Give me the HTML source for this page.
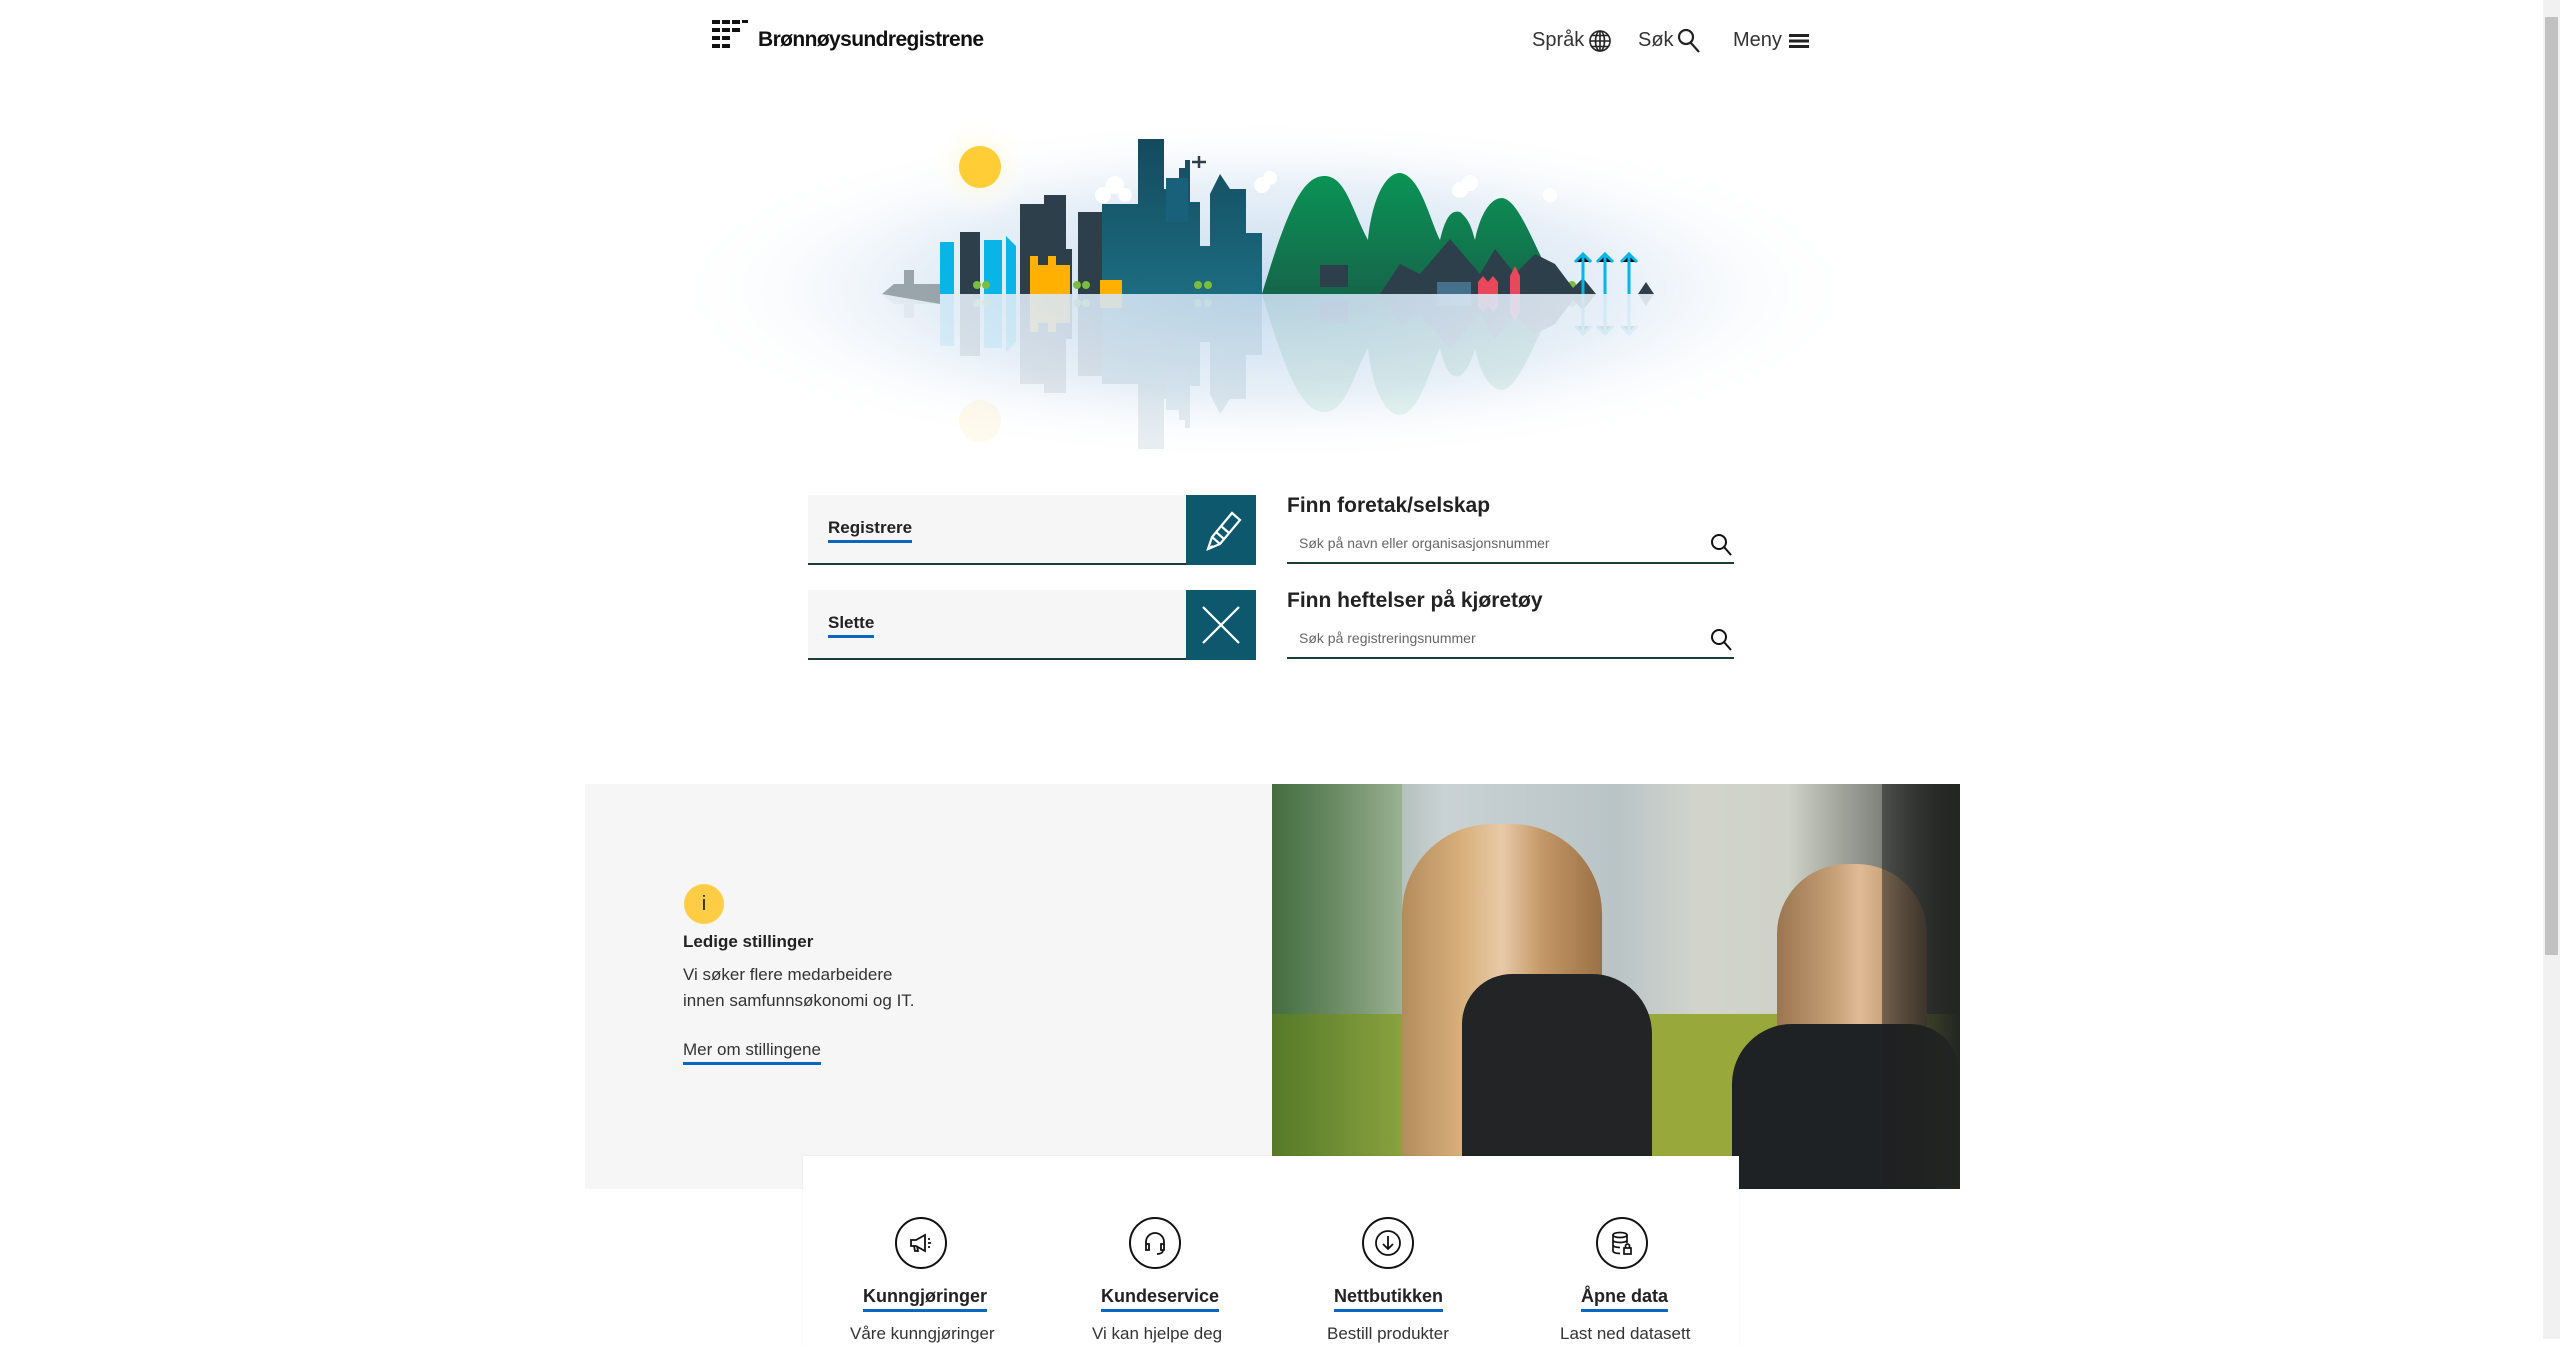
<!DOCTYPE html>
<html><head><meta charset="utf-8"><style>
*{margin:0;padding:0;box-sizing:border-box}
html,body{width:2560px;height:1339px;overflow:hidden;background:#fff;font-family:"Liberation Sans",sans-serif;color:#222}
.a{position:absolute}
.sb{left:2543px;top:0;width:17px;height:1339px;background:#f1f1f1}
.th{left:2545px;top:17px;width:13px;height:938px;background:#c1c1c1}
.nav{font-size:20px;color:#333;top:29px}
.card{background:#f6f6f6;border-bottom:2px solid #1a3c3c}
.sq{background:#0d586c}
.lk{font-weight:bold;font-size:17px;border-bottom:3px solid #0a66c2;padding-bottom:2px;color:#222}
.h{font-weight:bold;font-size:21px;color:#222}
.inp{border-bottom:2px solid #1a3c3c;font-size:14px;color:#666;padding-left:12px;padding-top:3px}
.ic{width:52px;height:52px;border:2px solid #111;border-radius:50%;display:flex;align-items:center;justify-content:center}
.tt{font-weight:bold;font-size:18px;border-bottom:3px solid #0a66c2;padding-bottom:2px}
</style></head><body>
<div class="a sb"></div><div class="a th"></div>
<svg class="a" style="left:712px;top:20px" width="36" height="30" viewBox="0 0 36 30">
<g fill="#111"><rect x="0" y="0" width="8" height="4"/><rect x="10" y="0" width="8" height="4"/><rect x="20" y="0" width="8" height="4"/><rect x="30" y="0" width="6" height="3"/>
<rect x="0" y="8" width="8" height="4"/><rect x="10" y="8" width="8" height="4"/><rect x="20" y="8" width="8" height="4"/>
<rect x="0" y="16" width="8" height="4"/><rect x="10" y="16" width="8" height="4"/>
<rect x="0" y="24" width="8" height="4"/><rect x="10" y="24" width="8" height="4"/></g></svg>
<div class="a" style="left:758px;top:28px;font-size:21px;font-weight:bold;color:#111;letter-spacing:-0.6px">Brønnøysundregistrene</div>
<div class="a nav" style="left:1532px">Språk</div>
<svg class="a" style="left:1588px;top:29px" width="24" height="24" viewBox="0 0 24 24" fill="none" stroke="#222" stroke-width="1.6"><circle cx="12" cy="12" r="10"/><ellipse cx="12" cy="12" rx="4.5" ry="10"/><path d="M2 12h20M4 6.5h16M4 17.5h16M12 2v20"/></svg>
<div class="a nav" style="left:1638px">Søk</div>
<svg class="a" style="left:1677px;top:28px" width="24" height="26" viewBox="0 0 24 26" fill="none" stroke="#222" stroke-width="2.2"><circle cx="9" cy="9" r="7"/><path d="M14 15l8 9"/></svg>
<div class="a nav" style="left:1733px">Meny</div>
<svg class="a" style="left:1789px;top:34px" width="20" height="14"><rect y="0" width="20" height="3" fill="#222"/><rect y="5.5" width="20" height="3" fill="#222"/><rect y="11" width="20" height="3" fill="#222"/></svg>

<svg class="a" style="left:0;top:0" width="2560" height="460" viewBox="0 0 2560 460">
<defs>
<radialGradient id="g" cx="0.5" cy="0.5" r="0.5"><stop offset="0" stop-color="#c6dcef"/><stop offset="0.6" stop-color="#e8f0f8"/><stop offset="1" stop-color="#fff" stop-opacity="0"/></radialGradient>
<radialGradient id="sg" cx="0.5" cy="0.5" r="0.5"><stop offset="0" stop-color="#fff4c8"/><stop offset="1" stop-color="#fff" stop-opacity="0"/></radialGradient>
<linearGradient id="mt" x1="0" y1="0" x2="0" y2="1"><stop offset="0" stop-color="#0a9455"/><stop offset="1" stop-color="#15664a"/></linearGradient>
<linearGradient id="bl" x1="0" y1="0" x2="0" y2="1"><stop offset="0" stop-color="#144a5e"/><stop offset="1" stop-color="#1c6c80"/></linearGradient>
<g id="city">
<path fill="#9aa5ab" d="M882 294l12-10h10v-14h10v14h26v20z"/>
<rect fill="#08b5e6" x="940" y="242" width="14" height="52"/>
<rect fill="#2d3f4b" x="960" y="232" width="20" height="62"/>
<path fill="#08b5e6" d="M984 240h18v54h-18zM1006 236l10 10v48h-10z"/>
<path fill="#2d3f4b" d="M1020 204h24v-9h22v54h6v45h-52z"/>
<rect fill="#2d3f4b" x="1078" y="212" width="24" height="82"/>
<rect fill="#ffb000" x="1030" y="265" width="40" height="29"/><rect fill="#ffb000" x="1030" y="256" width="8" height="12"/><rect fill="#ffb000" x="1048" y="256" width="8" height="12"/>
<path fill="url(#bl)" d="M1102 294v-90h36v-65h26v50h15v-21h6v-8h5v42h10v44h10v-52l10-20 10 15h16v44h16v61z"/>
<rect fill="#19607a" x="1166" y="178" width="22" height="44"/>
<rect fill="#ffb000" x="1100" y="280" width="22" height="14"/>
<g fill="#7bbd3c"><circle cx="977" cy="285" r="4"/><circle cx="986" cy="285" r="4"/><circle cx="1077" cy="285" r="4"/><circle cx="1086" cy="285" r="4"/><circle cx="1198" cy="285" r="4"/><circle cx="1208" cy="285" r="4"/><circle cx="1552" cy="285" r="4"/><circle cx="1562" cy="285" r="4"/><circle cx="1572" cy="285" r="4"/></g>
<path fill="url(#mt)" d="M1262 294C1290 200 1305 175 1326 176C1346 178 1352 210 1368 240C1372 200 1385 173 1400 173C1420 175 1430 220 1440 240C1446 215 1452 210 1460 212C1470 220 1472 230 1475 240C1480 215 1490 198 1502 198C1520 200 1535 250 1560 294z"/>
<path fill="#2d3f4b" d="M1380 294l20-30 20 10 30-35 30 35 15-25 20 25 20-20 20 10 18 24 10-10 13 16z"/>
<rect fill="#2d3f4b" x="1320" y="265" width="28" height="22"/>
<rect fill="#45708a" x="1437" y="282" width="34" height="12"/>
<path fill="#e8485a" d="M1478 294v-12l5-6 5 6 5-6 5 6v12zM1510 294v-18l5-10 5 10v18z"/>
<g stroke="#08b5e6" stroke-width="3"><path d="M1583 294v-40M1605 294v-40M1629 294v-40M1575 262l8-8 8 8M1597 262l8-8 8 8M1621 262l8-8 8 8"/></g>
<path fill="#2d3f4b" d="M1638 294l8-12 8 12z"/>
</g>
</defs>
<ellipse cx="1266" cy="290" rx="600" ry="175" fill="url(#g)"/>
<circle cx="980" cy="167" r="50" fill="url(#sg)"/>
<circle cx="980" cy="167" r="21" fill="#ffcd36"/>
<g fill="#fff"><circle cx="1103" cy="195" r="8"/><circle cx="1115" cy="185" r="9"/><circle cx="1125" cy="195" r="7"/><circle cx="1262" cy="185" r="8"/><circle cx="1270" cy="178" r="7"/><circle cx="1460" cy="190" r="8"/><circle cx="1470" cy="183" r="8"/><circle cx="1550" cy="195" r="7"/></g>
<path d="M1192 162h14M1199 156v12" stroke="#2d3f4b" stroke-width="2.5"/>
<use href="#city"/>
<g opacity="0.09" transform="translate(0,588) scale(1,-1)"><use href="#city"/><circle cx="980" cy="167" r="21" fill="#ffcd36"/></g>
</svg>

<div class="a card" style="left:808px;top:495px;width:448px;height:70px"></div>
<div class="a sq" style="left:1186px;top:495px;width:70px;height:70px"></div>
<svg class="a" style="left:1196px;top:505px" width="50" height="50" viewBox="0 0 50 50" fill="none" stroke="#fff" stroke-width="2.2"><path d="M12 44l4-12 20-24 8 7-20 24z M16 32l8 7M20 27l8 7M25 21l8 7M12 44l5-3"/></svg>
<div class="a lk" style="left:828px;top:518px">Registrere</div>
<div class="a card" style="left:808px;top:590px;width:448px;height:70px"></div>
<div class="a sq" style="left:1186px;top:590px;width:70px;height:70px"></div>
<svg class="a" style="left:1196px;top:600px" width="50" height="50"><path d="M7 7l36 36M43 7L7 43" stroke="#fff" stroke-width="2.2"/></svg>
<div class="a lk" style="left:828px;top:613px">Slette</div>

<div class="a h" style="left:1287px;top:494px">Finn foretak/selskap</div>
<div class="a inp" style="left:1287px;top:532px;width:447px;height:32px">Søk på navn eller organisasjonsnummer</div>
<svg class="a" style="left:1710px;top:533px" width="24" height="24" viewBox="0 0 24 24" fill="none" stroke="#111" stroke-width="2"><circle cx="9" cy="9" r="7"/><path d="M14 14l7 8"/></svg>
<div class="a h" style="left:1287px;top:589px">Finn heftelser på kjøretøy</div>
<div class="a inp" style="left:1287px;top:627px;width:447px;height:32px">Søk på registreringsnummer</div>
<svg class="a" style="left:1710px;top:628px" width="24" height="24" viewBox="0 0 24 24" fill="none" stroke="#111" stroke-width="2"><circle cx="9" cy="9" r="7"/><path d="M14 14l7 8"/></svg>

<div class="a" style="left:585px;top:784px;width:687px;height:405px;background:#f6f6f6"></div>
<div class="a" style="left:684px;top:884px;width:40px;height:40px;border-radius:50%;background:#ffcd45;text-align:center;line-height:40px;font-size:20px">i</div>
<div class="a" style="left:683px;top:932px;font-weight:bold;font-size:17px">Ledige stillinger</div>
<div class="a" style="left:683px;top:962px;font-size:17px;line-height:26px;color:#333">Vi søker flere medarbeidere<br>innen samfunnsøkonomi og IT.</div>
<div class="a" style="left:683px;top:1040px;font-size:17px;border-bottom:3px solid #0a66c2;padding-bottom:2px;color:#333">Mer om stillingene</div>
<div class="a" style="left:1272px;top:784px;width:688px;height:405px;overflow:hidden;background:linear-gradient(90deg,#6f8a74 0%,#c9d2d4 25%,#b9c4c6 50%,#d2d4cc 62%,#cfd2c8 75%,#3c3f3a 100%)">
<div class="a" style="left:0;top:230px;width:688px;height:175px;background:#98a83a"></div>
<div class="a" style="left:130px;top:40px;width:200px;height:365px;border-radius:90px 90px 0 0;background:linear-gradient(90deg,#b48c5c,#d8b07c 30%,#e8c9a8 50%,#c49866 70%,#9a7046)"></div>
<div class="a" style="left:190px;top:190px;width:190px;height:215px;border-radius:50px 60px 0 0;background:#222425"></div>
<div class="a" style="left:505px;top:80px;width:150px;height:325px;border-radius:70px 70px 0 0;background:linear-gradient(90deg,#9a7650,#c8a278 40%,#e0bb96 55%,#a07a50)"></div>
<div class="a" style="left:460px;top:240px;width:228px;height:165px;border-radius:60px 50px 0 0;background:#1e2224"></div>
<div class="a" style="left:0;top:0;width:130px;height:405px;background:linear-gradient(90deg,rgba(40,90,30,0.6),rgba(110,150,70,0.35))"></div>
<div class="a" style="left:610px;top:0;width:78px;height:405px;background:linear-gradient(90deg,rgba(30,30,30,0.5),#232523)"></div>
</div>

<div class="a" style="left:803px;top:1156px;width:936px;height:190px;background:#fff;box-shadow:0 0 2px rgba(0,0,0,0.08)"></div>
<div class="a ic" style="left:895px;top:1217px"><svg width="28" height="28" viewBox="0 0 28 28" fill="none" stroke="#111" stroke-width="1.8"><path d="M4 11h5l9-5v16l-9-5H4zM7 17l1 5h3l-1-5M21 10h2M21 14h3M21 18h2"/></svg></div>
<div class="a ic" style="left:1129px;top:1217px"><svg width="28" height="28" viewBox="0 0 28 28" fill="none" stroke="#111" stroke-width="1.8"><path d="M5 16v-3a9 9 0 0118 0v3M5 15h3v6H5zM20 15h3v6h-3zM22 21c0 3-3 4-6 4"/></svg></div>
<div class="a ic" style="left:1362px;top:1217px"><svg width="30" height="30" viewBox="0 0 30 30" fill="none" stroke="#111" stroke-width="1.8"><circle cx="15" cy="15" r="12"/><path d="M15 8v13M10 16l5 5 5-5"/></svg></div>
<div class="a ic" style="left:1596px;top:1217px"><svg width="28" height="28" viewBox="0 0 28 28" fill="none" stroke="#111" stroke-width="1.7"><ellipse cx="12" cy="6" rx="7" ry="2.5"/><path d="M5 6v16c0 1.5 3 2.5 7 2.5M19 6v8M5 11c0 1.5 3 2.5 7 2.5s7-1 7-2.5M5 16c0 1.5 3 2.5 7 2.5"/><rect x="16" y="19" width="7" height="6"/><path d="M17.5 19v-2a2 2 0 014 0v2"/></svg></div>
<div class="a tt" style="left:863px;top:1286px">Kunngjøringer</div>
<div class="a tt" style="left:1101px;top:1286px">Kundeservice</div>
<div class="a tt" style="left:1334px;top:1286px">Nettbutikken</div>
<div class="a tt" style="left:1581px;top:1286px">Åpne data</div>
<div class="a" style="left:850px;top:1324px;font-size:17px;color:#333">Våre kunngjøringer</div>
<div class="a" style="left:1092px;top:1324px;font-size:17px;color:#333">Vi kan hjelpe deg</div>
<div class="a" style="left:1327px;top:1324px;font-size:17px;color:#333">Bestill produkter</div>
<div class="a" style="left:1560px;top:1324px;font-size:17px;color:#333">Last ned datasett</div>
</body></html>
